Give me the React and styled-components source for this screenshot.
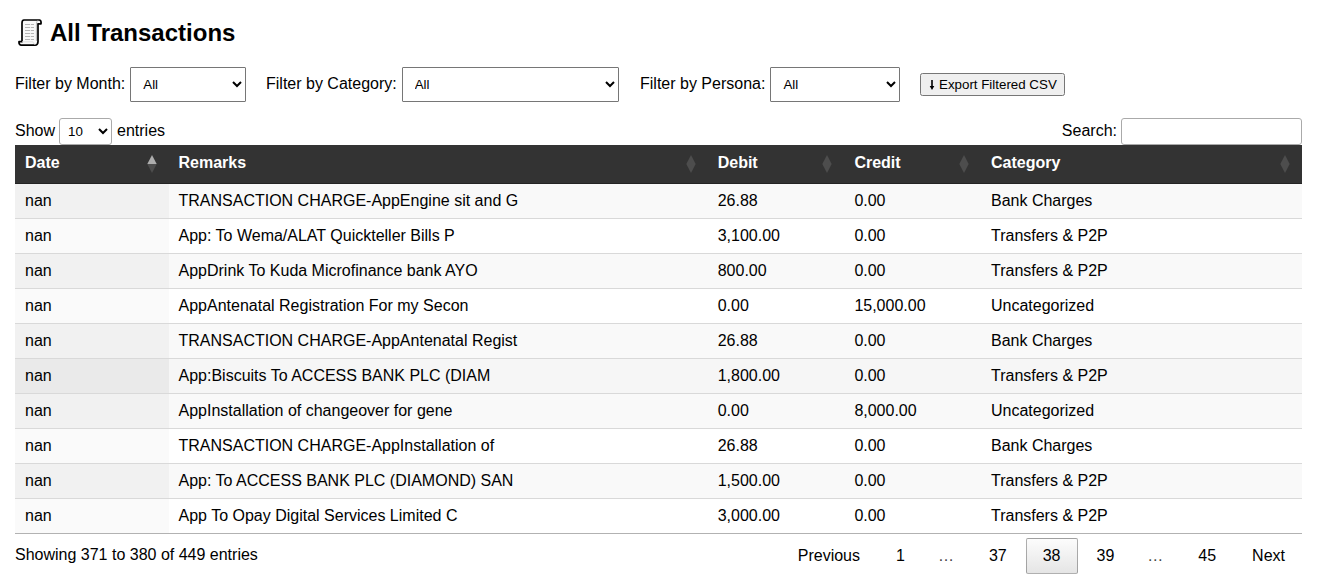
import React from "react";
import styled, { createGlobalStyle } from "styled-components";

const GlobalStyle = createGlobalStyle`
  body {
    margin: 0;
    background: #fff;
    color: #000;
    font: 16px/18px "Liberation Sans", Arial, sans-serif;
  }
`;

const Page = styled.main`
  width: 1287px;
  padding: 19px 0 0 15px;
`;

const Title = styled.h2`
  display: flex;
  align-items: center;
  height: 28px;
  margin: 0;
  font-size: 24px;
  line-height: 28px;
  gap: 6px;
`;

const Scroll = styled.svg`
  width: 29px;
  height: 28px;
`;

const Filters = styled.div`
  display: flex;
  align-items: center;
  height: 35px;
  margin-top: 20px;
`;

const FilterLabel = styled.label`
  display: flex;
  align-items: center;
  gap: 5px;
  width: ${(p) => p.$width}px;
  margin-right: ${(p) => p.$gap ?? 20}px;
  white-space: nowrap;
  line-height: 32px;
  span { position: relative; top: -1px; }
`;

const Select = styled.select`
  flex: 1;
  min-width: 0;
  box-sizing: border-box;
  height: 35px;
  padding: 8px;
  border: 1px solid #767676;
  border-radius: 1px;
  background: #fff;
  color: #000;
  font: 13.333px "Liberation Sans", Arial, sans-serif;
`;

const ExportButton = styled.button`
  display: flex;
  align-items: center;
  box-sizing: border-box;
  width: 145px;
  height: 23px;
  margin-top: -1px;
  padding: 1px 6px 0 8px;
  border: 1px solid #767676;
  border-radius: 2.5px;
  background: #efefef;
  color: #000;
  font: 13.333px "Liberation Sans", Arial, sans-serif;
  white-space: nowrap;
  svg { width: 6px; height: 12px; margin-right: 4px; }
`;

const Controls = styled.div`
  display: flex;
  justify-content: space-between;
  height: 27px;
  margin-top: 16px;
  line-height: 25px;
`;

const Control = styled.label`
  display: flex;
  gap: 4px;
`;

const LengthSelect = styled(Select)`
  flex: none;
  width: 53px;
  height: 27px;
  padding: 4px;
  border-color: #aaa;
  border-radius: 3px;
  margin-right: 1px;
`;

const SearchInput = styled.input`
  box-sizing: border-box;
  width: 181px;
  height: 27px;
  padding: 5px;
  border: 1px solid #aaa;
  border-radius: 3px;
`;

const Table = styled.table`
  width: 1287px;
  table-layout: fixed;
  border-collapse: separate;
  border-spacing: 0;
  border-bottom: 1px solid rgba(0, 0, 0, 0.3);
`;

const Th = styled.th`
  height: 38px;
  padding: 0 12px 0 10px;
  border-bottom: 1px solid #242424;
  background: #333;
  color: #fff;
  text-align: left;
`;

const HeadCell = styled.div`
  display: flex;
  justify-content: space-between;
  height: 18px;
  margin-top: -2px;
  svg { width: 10px; height: 18px; margin-top: 1px; }
`;

const Row = styled.tr`
  background: ${(p) => p.$tones[1]};
  td:first-child { background: ${(p) => p.$tones[0]}; }
  &:first-child td { border-top: 0; }
`;

const Td = styled.td`
  height: 34px;
  padding: 0 10px;
  border-top: 1px solid #d9d9d9;
  white-space: nowrap;
`;

const Footer = styled.div`
  display: flex;
  justify-content: space-between;
  padding-top: 4px;
`;

const Info = styled.div`
  padding-top: 8px;
`;

const Pager = styled.nav`
  display: flex;
`;

const PageButton = styled.a`
  box-sizing: border-box;
  min-width: 24px;
  height: 36px;
  margin-left: 2px;
  padding: 8px 16px;
  border: 1px solid ${(p) => (p.$current ? "rgba(0,0,0,.3)" : "transparent")};
  border-radius: 2px;
  background: ${(p) => (p.$current ? "linear-gradient(rgba(230,230,230,.1), rgba(0,0,0,.1))" : "none")};
`;

const Ellipsis = styled.span`
  padding: 9px 16px;
  color: #444;
`;

const odd = ["#f1f1f1", "#f9f9f9"];
const even = ["#fafafa", "#ffffff"];
const hovered = ["#eaeaea", "#f6f6f6"];

const rows = [
  ["TRANSACTION CHARGE-AppEngine sit and G", "26.88", "0.00", "Bank Charges"],
  ["App: To Wema/ALAT Quickteller Bills P", "3,100.00", "0.00", "Transfers & P2P"],
  ["AppDrink To Kuda Microfinance bank AYO", "800.00", "0.00", "Transfers & P2P"],
  ["AppAntenatal Registration For my Secon", "0.00", "15,000.00", "Uncategorized"],
  ["TRANSACTION CHARGE-AppAntenatal Regist", "26.88", "0.00", "Bank Charges"],
  ["App:Biscuits To ACCESS BANK PLC (DIAM", "1,800.00", "0.00", "Transfers & P2P"],
  ["AppInstallation of changeover for gene", "0.00", "8,000.00", "Uncategorized"],
  ["TRANSACTION CHARGE-AppInstallation of", "26.88", "0.00", "Bank Charges"],
  ["App: To ACCESS BANK PLC (DIAMOND) SAN", "1,500.00", "0.00", "Transfers & P2P"],
  ["App To Opay Digital Services Limited C", "3,000.00", "0.00", "Transfers & P2P"],
];

const columns = [
  ["Date", 153.5],
  ["Remarks", 539.2],
  ["Debit", 136.7],
  ["Credit", 136.6],
  ["Category", 321],
];

const pages = ["Previous", "1", "…", "37", "38", "39", "…", "45", "Next"];

const ScrollIcon = () => (
  <Scroll viewBox="0 0 29 28" fill="none" stroke="#000" strokeWidth="1.7" strokeLinejoin="round" strokeLinecap="round">
    <path d="M9 1H24.5Q26.5 1.5 26 4.8H23V22.5Q23 26 20 26.2H6Q3.7 25.8 4 22.7H7V4Q7 1.2 9 1Z" fill="#f8f8f8" />
    <path d="M22.5 1.7Q21.4 2.4 21.4 5V21.5" stroke="#bbb" strokeWidth="1" />
    <path d="M7.5 22.8H18Q18 25 20 25.4" stroke="#ddd" strokeWidth="1" />
    <path d="M10 5.5H19M10 8.5H19M10 11.5H19M10 14.5H19M10 17.5H19M10 20.5H19" stroke="#b5b5b5" strokeWidth="1" strokeLinecap="butt" />
    <path d="M15.5 4V21.5" stroke="#f8f8f8" strokeWidth=".8" />
  </Scroll>
);

const SortIcon = ({ ascending }) => (
  <svg viewBox="0 0 10 18">
    <path d="M5 0L9.7 9H.3Z" fill={ascending ? "#adadad" : "#4d4d4d"} />
    <path d="M.3 9H9.7L5 18Z" fill="#4d4d4d" />
  </svg>
);

const Filter = ({ name, width, gap }) => (
  <FilterLabel $width={width} $gap={gap}>
    <span>Filter by {name}:</span>
    <Select><option>All</option></Select>
  </FilterLabel>
);

export default function App() {
  return (
    <Page>
      <GlobalStyle />
      <Title><ScrollIcon />All Transactions</Title>
      <Filters>
        <Filter name="Month" width={231} />
        <Filter name="Category" width={353} gap={21} />
        <Filter name="Persona" width={260} />
        <ExportButton>
          <svg viewBox="0 0 6 12">
            <path d="M2.2 1H3.8V7H5.3L3 11L.7 7H2.2Z" fill="#000" />
          </svg>
          Export Filtered CSV
        </ExportButton>
      </Filters>
      <Controls>
        <Control>
          Show
          <LengthSelect><option>10</option></LengthSelect>
          entries
        </Control>
        <Control>Search:<SearchInput type="search" /></Control>
      </Controls>
      <Table>
        <colgroup>
          {columns.map(([name, width]) => <col key={name} style={{ width }} />)}
        </colgroup>
        <thead>
          <tr>
            {columns.map(([name], i) => (
              <Th key={name}><HeadCell>{name}<SortIcon ascending={i === 0} /></HeadCell></Th>
            ))}
          </tr>
        </thead>
        <tbody>
          {rows.map((row, i) => (
            <Row key={i} $tones={i === 5 ? hovered : i % 2 ? even : odd}>
              <Td>nan</Td>
              {row.map((text, j) => <Td key={j}>{text}</Td>)}
            </Row>
          ))}
        </tbody>
      </Table>
      <Footer>
        <Info>Showing 371 to 380 of 449 entries</Info>
        <Pager>
          {pages.map((p, i) =>
            p === "…" ? <Ellipsis key={i}>…</Ellipsis> : <PageButton key={i} $current={p === "38"}>{p}</PageButton>
          )}
        </Pager>
      </Footer>
    </Page>
  );
}
